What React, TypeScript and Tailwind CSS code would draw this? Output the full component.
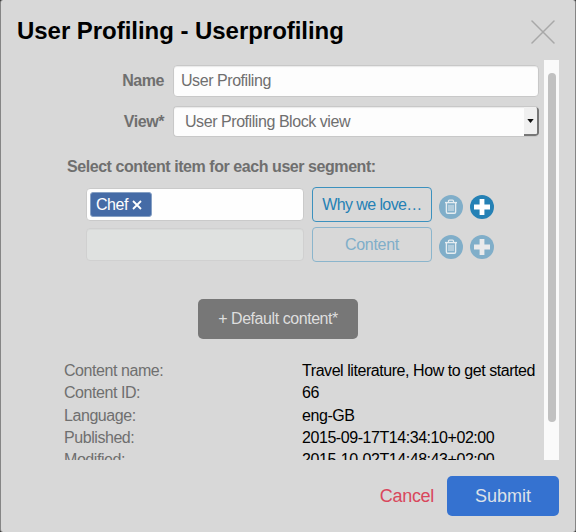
import React from "react";

const details: [string, string][] = [
  ["Content name:", "Travel literature, How to get started"],
  ["Content ID:", "66"],
  ["Language:", "eng-GB"],
  ["Published:", "2015-09-17T14:34:10+02:00"],
  ["Modified:", "2015-10-02T14:48:43+02:00"],
];

function TrashButton() {
  return (
    <button aria-label="Delete" className="flex size-6 items-center justify-center rounded-full bg-[#80aec9]">
      <svg width="14" height="16" viewBox="0 0 14 16" fill="none" stroke="#e6edf1">
        <path d="M1 3.6h12" strokeWidth="1.4" />
        <path d="M4.5 3.4V2.2q0-1 .9-1h3.2q.9 0 .9 1v1.2" strokeWidth="1.2" />
        <path d="M2.4 4v9q0 1.2 1.2 1.2h6.8q1.2 0 1.2-1.2V4" strokeWidth="1.4" />
        <path d="M5 5.8v6.3M7 5.8v6.3M9 5.8v6.3" strokeWidth="1" />
      </svg>
    </button>
  );
}

function AddButton({ disabled }: { disabled?: boolean }) {
  return (
    <button
      aria-label="Add"
      className={`flex size-6 items-center justify-center rounded-full ${disabled ? "bg-[#80aec9]" : "bg-[#2581b5]"}`}
    >
      <svg width="16" height="16" viewBox="0 0 16 16" fill="none" stroke={disabled ? "#e9eaeb" : "#ffffff"}>
        <path d="M8 0v16M0 8h16" strokeWidth="4.8" />
      </svg>
    </button>
  );
}

export default function App() {
  return (
    <div className="h-[532px] w-[576px] bg-[#3c3c3c] font-['Liberation_Sans',Arial,sans-serif] text-[16px] tracking-[-0.44px] text-[#6f6f6f]">
      <div className="flex h-full flex-col overflow-hidden rounded-[3px] border-x border-[#858585] bg-[#d8d8d8]">
        <header className="flex h-[60px] shrink-0 items-center justify-between pt-[3px] pr-5 pl-4">
          <h1 className="-mt-[2px] text-[24px] font-bold tracking-[-0.04px] whitespace-nowrap text-black">User Profiling - Userprofiling</h1>
          <svg width="24" height="24" viewBox="0 0 24 24" fill="none" stroke="#a8a8a8" strokeWidth="1.5" strokeLinecap="round">
            <path d="M1 1l22 22M23 1L1 23" />
          </svg>
        </header>

        <div className="flex h-[400px] shrink-0 overflow-hidden">
          <div className="w-[543px] shrink-0">
            <div className="mt-[5px] flex h-[32px] items-center">
              <label className="w-[163px] pb-[1px] text-right font-bold">Name</label>
              <div className="ml-[9px] flex h-[32px] w-[366px] items-center rounded-[4px] border border-[#c8c8c8] bg-[#fdfdfd] pl-[7px] shadow-[inset_0_1px_1px_rgba(0,0,0,0.08)]">
                User Profiling
              </div>
            </div>
            <div className="mt-[9px] flex h-[31px] items-center">
              <label className="w-[163px] text-right font-bold">View*</label>
              <div className="ml-[9px] flex h-[31px] w-[366px] items-center overflow-hidden rounded-[4px] border border-r-0 border-[#c8c8c8] bg-[#fdfdfd] pl-[11px] shadow-[inset_0_1px_1px_rgba(0,0,0,0.08)]">
                <span className="flex-1">User Profiling Block view</span>
                <span className="flex h-[29px] w-[15px] items-center justify-center rounded-r-[3px] border-r-2 border-b-2 border-[#777] bg-[#f0f0f0]">
                  <svg width="7" height="4" viewBox="0 0 7 4">
                    <path d="M0.3 0h6.4L3.5 4z" fill="#111" />
                  </svg>
                </span>
              </div>
            </div>

            <h2 className="mt-[19px] ml-[66px] h-[22px] leading-[22px] font-bold whitespace-nowrap">
              Select content item for each user segment:
            </h2>

            <div className="mt-[9px] ml-[85px] flex h-[35px] items-center">
              <div className="flex h-[33px] w-[218px] items-center rounded-[4px] border border-[#cacaca] bg-[#fefefe] pl-[3px]">
                <span className="flex h-[25px] w-[62px] items-center rounded-[3px] border border-[#86a0c4] bg-[#456ba6] pl-[5px] text-white">
                  <span>Chef</span>
                  <svg className="mt-px ml-[4px]" width="10" height="10" viewBox="0 0 10 10" stroke="white" strokeWidth="1.8">
                    <path d="M1 1l8 8M9 1L1 9" />
                  </svg>
                </span>
              </div>
              <button className="ml-[8px] h-[35px] w-[120px] rounded-[4px] border border-[#3c91be] tracking-[-0.6px] text-[#2581b5]">Why we love…</button>
              <div className="mt-[5px] ml-[7px] flex gap-[7px]">
                <TrashButton />
                <AddButton />
              </div>
            </div>

            <div className="mt-[5px] ml-[85px] flex h-[35px] items-center">
              <div className="h-[33px] w-[218px] rounded-[4px] border border-[#d0d0d0] bg-[#dfe1e0] shadow-[inset_0_1px_1px_rgba(0,0,0,0.03)]" />
              <button className="ml-[8px] h-[35px] w-[120px] rounded-[4px] border border-[#8bb5cc] tracking-[-0.3px] text-[#80aec9]">Content</button>
              <div className="mt-[4px] ml-[7px] flex gap-[7px]">
                <TrashButton />
                <AddButton disabled />
              </div>
            </div>

            <button className="mt-[37px] ml-[197px] h-[40px] w-[160px] rounded-[5px] bg-[#777777] text-[#dedede]">
              + Default content*
            </button>

            <dl className="mt-[21px] ml-[63px] leading-[22.3px] whitespace-nowrap">
              {details.map(([term, value]) => (
                <div key={term} className="flex h-[22.3px]">
                  <dt className="w-[238px] shrink-0">{term}</dt>
                  <dd className="text-black">{value}</dd>
                </div>
              ))}
            </dl>
          </div>
          <div className="flex w-[15px] shrink-0 justify-center bg-[#fafafa] pt-[13px]">
            <div className="h-[349px] w-[8px] rounded-full bg-[#c1c1c1]" />
          </div>
        </div>

        <footer className="flex flex-1 items-start justify-end gap-[13px] pt-4 pr-4 text-[18px] tracking-normal">
          <button className="h-[40px] text-[18px] tracking-[-0.3px] text-[#d9475c]">Cancel</button>
          <button className="h-[40px] w-[112px] rounded-[5px] bg-[#3572d0] text-[#dce1e8]">Submit</button>
        </footer>
      </div>
    </div>
  );
}
